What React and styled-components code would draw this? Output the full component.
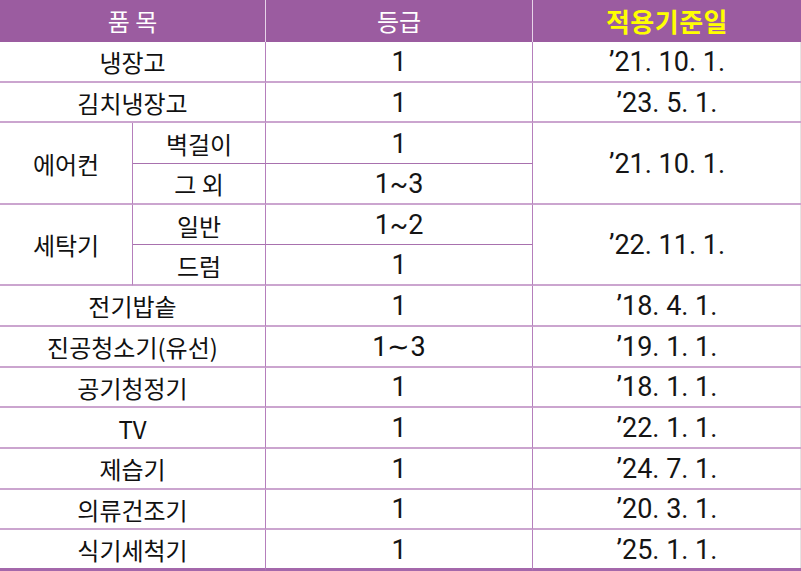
import React from 'react'
import styled, { createGlobalStyle } from 'styled-components'

const GlobalStyle = createGlobalStyle`
  html, body {
    margin: 0;
    padding: 0;
    background: #ffffff;
  }
`

const rows = [
  { name: '냉장고', grade: '1', date: '’21. 10. 1.' },
  { name: '김치냉장고', grade: '1', date: '’23. 5. 1.' },
  { group: '에어컨', subs: [['벽걸이', '1'], ['그 외', '1~3']], date: '’21. 10. 1.' },
  { group: '세탁기', subs: [['일반', '1~2'], ['드럼', '1']], date: '’22. 11. 1.' },
  { name: '전기밥솥', grade: '1', date: '’18. 4. 1.' },
  { name: '진공청소기(유선)', grade: '1∼3', wide: true, date: '’19. 1. 1.' },
  { name: '공기청정기', grade: '1', date: '’18. 1. 1.' },
  { name: 'TV', grade: '1', date: '’22. 1. 1.' },
  { name: '제습기', grade: '1', date: '’24. 7. 1.' },
  { name: '의류건조기', grade: '1', date: '’20. 3. 1.' },
  { name: '식기세척기', grade: '1', date: '’25. 1. 1.' },
]

function App() {
  let count = 0
  const isLast = (span = 1) => {
    count += span
    return count >= 13
  }

  return (
    <>
      <GlobalStyle />
      <Grid>
        <Head $span={2}>품 목</Head>
        <Head>등급</Head>
        <Head $accent $end>적용기준일</Head>

        {rows.map((r) => {
          if (r.group) {
            const last = isLast(2)
            return (
              <React.Fragment key={r.group}>
                <Cell $rows={2} $last={last}>{r.group}</Cell>
                <Cell $soft>{r.subs[0][0]}</Cell>
                <Num $soft>{r.subs[0][1]}</Num>
                <Num $rows={2} $end $last={last}>{r.date}</Num>
                <Cell $last={last}>{r.subs[1][0]}</Cell>
                <Num $last={last}>{r.subs[1][1]}</Num>
              </React.Fragment>
            )
          }
          const last = isLast(1)
          return (
            <React.Fragment key={r.name}>
              <Cell $span={2} $last={last}>{r.name}</Cell>
              {r.wide ? (
                <Tilde $last={last}>{r.grade}</Tilde>
              ) : (
                <Num $last={last}>{r.grade}</Num>
              )}
              <Num $end $last={last}>{r.date}</Num>
            </React.Fragment>
          )
        })}
      </Grid>
    </>
  )
}

const Grid = styled.div`
  display: grid;
  grid-template-columns: 133px 133px 267px 268px;
  grid-template-rows: 42px repeat(13, 1fr);
  width: 801px;
  height: 571px;
  box-sizing: border-box;
  border-right: 1px solid #e4e4e4;
`

const Head = styled.div`
  grid-column: span ${(p) => p.$span || 1};
  display: flex;
  align-items: center;
  justify-content: center;
  background: #9b5ca0;
  color: ${(p) => (p.$accent ? '#ffff00' : '#ffffff')};
  font-family: 'Noto Sans CJK KR', sans-serif;
  font-weight: ${(p) => (p.$accent ? 700 : 400)};
  font-size: ${(p) => (p.$accent ? '26px' : '24px')};
  letter-spacing: ${(p) => (p.$accent ? '0.5px' : '0')};
  border-right: ${(p) => (p.$end ? 'none' : '1px solid #e6d3e8')};
  padding-bottom: 2px;
  box-sizing: border-box;
`

const Cell = styled.div`
  grid-column: span ${(p) => p.$span || 1};
  grid-row: span ${(p) => p.$rows || 1};
  display: flex;
  align-items: center;
  justify-content: center;
  box-sizing: border-box;
  border-right: ${(p) => (p.$end ? 'none' : '1px solid #b57fbc')};
  border-bottom: ${(p) =>
    p.$last ? '3px solid #a468ab' : p.$soft ? '1px solid #a871ae' : '2px solid #cba5cf'};
  color: #111111;
  font-family: 'Noto Sans CJK KR', sans-serif;
  font-size: 24px;
  padding-top: 1px;
`

const Num = styled(Cell)`
  font-family: Roboto, 'Noto Sans CJK KR', sans-serif;
  font-size: 27px;
  color: #151515;
`

const Tilde = styled(Cell)`
  font-family: Roboto, 'Noto Sans CJK KR', sans-serif;
  font-size: 27px;
`

export default App
